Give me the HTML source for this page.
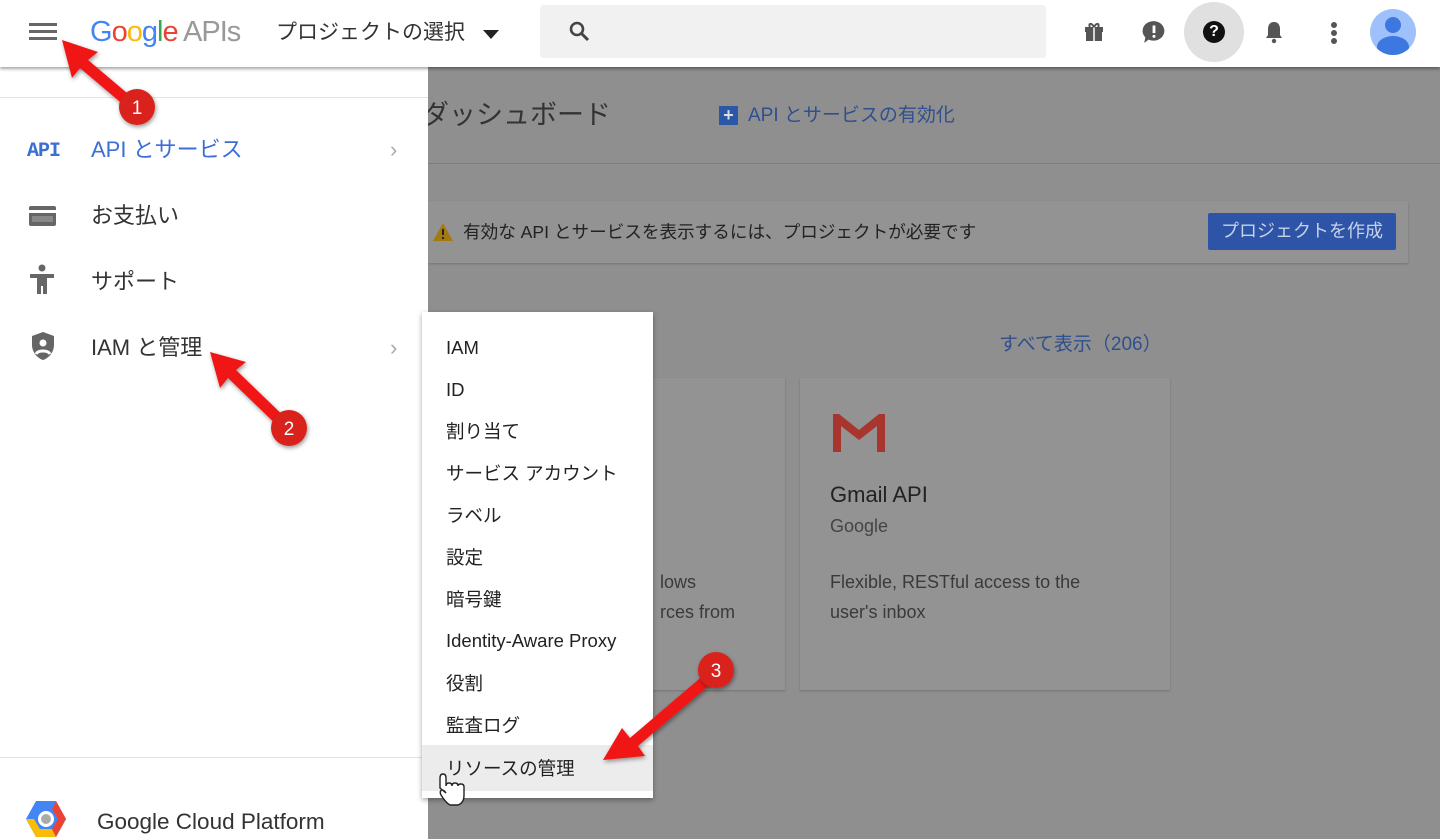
<!DOCTYPE html>
<html><head><meta charset="utf-8">
<style>
*{margin:0;padding:0;box-sizing:border-box}
body{width:1440px;height:839px;overflow:hidden;position:relative;background:#8f8f8f;font-family:"Liberation Sans","Noto Sans CJK JP",sans-serif;color:#212121}
.a{position:absolute}
.t{white-space:nowrap;line-height:1.2;transform:translateY(3px)}
#hdr .t{transform:translateY(1px)}
.btn{transform:none!important}
#hdr{left:0;top:0;width:1440px;height:67px;background:#fff;box-shadow:0 2px 3px rgba(0,0,0,.35);z-index:5}
#side{left:0;top:67px;width:428px;height:772px;background:#fff;z-index:3}
#menu{left:422px;top:312px;width:231px;height:486px;background:#fff;box-shadow:0 2px 5px rgba(0,0,0,.35);z-index:6}
#menu div{position:absolute;left:24px;font-size:18.5px;color:#222;white-space:nowrap;line-height:22px;height:22px}
</style></head><body>
<div id="hdr" class="a">
  <div class="a" style="left:29px;top:23px;width:28px;height:3px;background:#666;box-shadow:0 7px 0 #666,0 14px 0 #666"></div>
  <div class="a t" style="left:90px;top:14px;font-size:29px;letter-spacing:-1px"><span style="color:#4285f4">G</span><span style="color:#ea4335">o</span><span style="color:#fbbc05">o</span><span style="color:#4285f4">g</span><span style="color:#34a853">l</span><span style="color:#ea4335">e</span> <span style="color:#999">APIs</span></div>
  <div class="a t" style="left:276px;top:19px;font-size:21px;color:#333">プロジェクトの選択</div>
  <div class="a" style="left:483px;top:30px;border:8px solid transparent;border-top:9px solid #222;border-bottom:0"></div>
  <div class="a" style="left:540px;top:5px;width:506px;height:53px;background:#f1f1f1;border-radius:3px"></div>
  <svg class="a" style="left:568px;top:20px" width="24" height="24" viewBox="0 0 24 24"><circle cx="9" cy="9" r="6" fill="none" stroke="#444" stroke-width="2.6"/><path d="M13 13l7 7" stroke="#444" stroke-width="3"/></svg>
  <svg class="a" style="left:1082px;top:20px" width="24" height="24" viewBox="0 0 24 24"><path d="M3 7h18v5H3zM4 12h16v9H4z" fill="#555"/><path d="M12 7v14" stroke="#fff" stroke-width="1.5"/><path d="M12 7C9 2 6 4 8 7M12 7c3-5 6-3 4 0" fill="none" stroke="#555" stroke-width="2"/></svg>
  <svg class="a" style="left:1141px;top:19px" width="26" height="26" viewBox="0 0 24 24"><path d="M12 2a10 9 0 1 1-5 17l-4 3 1-5A10 9 0 0 1 12 2z" fill="#555"/><path d="M12 6v7" stroke="#fff" stroke-width="2.6"/><circle cx="12" cy="16" r="1.4" fill="#fff"/></svg>
  <div class="a" style="left:1184px;top:2px;width:60px;height:60px;border-radius:50%;background:#e0e0e0"></div>
  <div class="a" style="left:1203px;top:21px;width:22px;height:22px;border-radius:50%;background:#111;color:#fff;font-weight:bold;font-size:16px;text-align:center;line-height:22px">?</div>
  <svg class="a" style="left:1262px;top:19px" width="24" height="26" viewBox="0 0 24 26"><path d="M12 3c-4 0-6 3-6 7v6l-2 3h16l-2-3v-6c0-4-2-7-6-7z" fill="#555"/><circle cx="12" cy="22" r="2.2" fill="#555"/></svg>
  <div class="a" style="left:1331px;top:22px;width:6px;height:6px;border-radius:50%;background:#555;box-shadow:0 8px 0 #555,0 16px 0 #555"></div>
  <div class="a" style="left:1370px;top:9px;width:46px;height:46px;border-radius:50%;background:#9fc1fb;overflow:hidden">
    <div class="a" style="left:15px;top:8px;width:16px;height:16px;border-radius:50%;background:#3c78e0"></div>
    <div class="a" style="left:7px;top:27px;width:32px;height:22px;border-radius:50%;background:#3c78e0"></div>
  </div>
</div>

<div class="a t" style="left:422px;top:96px;font-size:27px;color:#333">ダッシュボード</div>
<div class="a" style="left:719px;top:106px;width:19px;height:19px;background:#2b57a8;color:#ddd;font-weight:bold;text-align:center;line-height:19px;font-size:18px">+</div>
<div class="a t" style="left:748px;top:102px;font-size:19px;color:#2f4f8e">API とサービスの有効化</div>
<div class="a" style="left:428px;top:163px;width:1012px;height:1px;background:#7d7d7d"></div>
<div class="a" style="left:428px;top:201px;width:980px;height:62px;background:#939393;box-shadow:0 1px 2px rgba(0,0,0,.2)"></div>
<svg class="a" style="left:432px;top:222px" width="22" height="20" viewBox="0 0 22 20"><path d="M11 1L21 19H1z" fill="#a37a10"/><path d="M11 7v6" stroke="#222" stroke-width="2"/><circle cx="11" cy="16" r="1.1" fill="#222"/></svg>
<div class="a t" style="left:463px;top:219px;font-size:17.6px;color:#222">有効な API とサービスを表示するには、プロジェクトが必要です</div>
<div class="a t btn" style="left:1208px;top:213px;width:188px;height:37px;background:#2d54a6;color:#c8d2e6;font-size:18px;text-align:center;line-height:37px;border-radius:2px">プロジェクトを作成</div>
<div class="a t" style="left:600px;top:325px;font-size:27px;color:#333">ビス</div>
<div class="a t" style="left:999px;top:331px;font-size:19px;color:#2f4f8e">すべて表示（206）</div>
<div class="a" style="left:560px;top:378px;width:225px;height:312px;background:#939393;box-shadow:0 1px 2px rgba(0,0,0,.2)"></div>
<div class="a" style="left:800px;top:378px;width:370px;height:312px;background:#939393;box-shadow:0 1px 2px rgba(0,0,0,.2)"></div>
<div class="a t" style="left:660px;top:564px;font-size:18px;color:#3a3a3a;line-height:30px">lows<br>rces from</div>
<svg class="a" style="left:830px;top:410px" width="58" height="44" viewBox="0 0 58 44"><path d="M3 4v38h8V16l18 14 18-14v26h8V4h-6L29 20 9 4z" fill="#a8352e"/></svg>
<div class="a t" style="left:830px;top:479px;font-size:22px;color:#222">Gmail API</div>
<div class="a t" style="left:830px;top:513px;font-size:18px;color:#444">Google</div>
<div class="a t" style="left:830px;top:564px;font-size:18px;color:#3a3a3a;line-height:30px">Flexible, RESTful access to the<br>user's inbox</div>

<div id="side" class="a">
  <div class="a" style="left:0;top:30px;width:428px;height:1px;background:#e3e3e3"></div>
  <div class="a t" style="left:27px;top:70px;font-family:'Liberation Mono',monospace;font-weight:bold;font-size:20px;color:#3b6fd4;letter-spacing:-1px">API</div>
  <div class="a t" style="left:91px;top:67px;font-size:22px;color:#3b6fd4">API とサービス</div>
  <div class="a t" style="left:390px;top:67px;font-size:22px;color:#aaa">›</div>
  <div class="a" style="left:29px;top:139px;width:27px;height:20px;background:#666;border-radius:2px"><div class="a" style="left:0;top:4px;width:27px;height:3px;background:#fff"></div><div class="a" style="left:3px;top:10px;width:21px;height:6px;background:#888"></div></div>
  <div class="a t" style="left:91px;top:133px;font-size:22px;color:#333">お支払い</div>
  <svg class="a" style="left:28px;top:197px" width="28" height="32" viewBox="0 0 28 32"><circle cx="14" cy="4" r="3.5" fill="#666"/><path d="M2 10h24v4h-7v16h-4v-8h-2v8H9V14H2z" fill="#666"/></svg>
  <div class="a t" style="left:91px;top:199px;font-size:22px;color:#333">サポート</div>
  <svg class="a" style="left:30px;top:264px" width="26" height="30" viewBox="0 0 26 30"><path d="M13 1L2 5v9c0 7 5 13 11 15 6-2 11-8 11-15V5z" fill="#666"/><circle cx="13" cy="12" r="3.5" fill="#fff"/><path d="M6 23c2-4 12-4 14 0" stroke="#fff" stroke-width="3" fill="none"/></svg>
  <div class="a t" style="left:91px;top:265px;font-size:22px;color:#333">IAM と管理</div>
  <div class="a t" style="left:390px;top:265px;font-size:22px;color:#aaa">›</div>
  <div class="a" style="left:0;top:690px;width:428px;height:1px;background:#e3e3e3"></div>
  <svg class="a" style="left:26px;top:733px" width="40" height="38" viewBox="0 0 40 38"><path d="M10 1h20l10 18-10 18H10L0 19z" fill="#4285f4"/><path d="M0 19l10 18h20l-4-8H14L8 19z" fill="#fbbc05"/><path d="M30 37l10-18-10-18-4 8 6 10-6 10z" fill="#ea4335"/><circle cx="20" cy="19" r="8" fill="#fff"/><circle cx="20" cy="19" r="5" fill="#aaa"/></svg>
  <div class="a t" style="left:97px;top:738px;font-size:22.5px;color:#333">Google Cloud Platform</div>
</div>

<div id="menu" class="a">
  <div style="top:25px">IAM</div>
  <div style="top:67px">ID</div>
  <div style="top:109px">割り当て</div>
  <div style="top:151px">サービス アカウント</div>
  <div style="top:193px">ラベル</div>
  <div style="top:235px">設定</div>
  <div style="top:277px">暗号鍵</div>
  <div style="top:318px">Identity-Aware Proxy</div>
  <div style="top:361px">役割</div>
  <div style="top:403px">監査ログ</div>
  <div style="top:433px;left:0;width:231px;height:46px;background:#ececec"></div>
  <div style="top:446px">リソースの管理</div>
</div>

<svg class="a" style="left:0;top:0;z-index:10" width="1440" height="839">
  <defs><filter id="s"><feDropShadow dx="1" dy="2" stdDeviation="2" flood-opacity=".4"/></filter></defs>
  <g filter="url(#s)" fill="#f01616">
    <path d="M62 40 L98 52 L88 60 L140 104 L132 112 L80 68 L72 78 Z"/>
    <path d="M210 352 L246 362 L236 370 L292 424 L284 432 L228 378 L220 388 Z"/>
    <path d="M603 760 L622 728 L630 738 L712 668 L720 676 L638 746 L645 756 Z"/>
  </g>
  <g filter="url(#s)">
    <circle cx="137" cy="107" r="18" fill="#d9201c"/>
    <circle cx="289" cy="428" r="18" fill="#d9201c"/>
    <circle cx="716" cy="670" r="18" fill="#d9201c"/>
  </g>
  <g fill="#fff" font-family="Liberation Sans,sans-serif" font-size="19" text-anchor="middle">
    <text x="137" y="114">1</text><text x="289" y="435">2</text><text x="716" y="677">3</text>
  </g>
  <path d="M440 788 v-10 q0-4 3-4 q3 0 3 4 v8 q0-3 3-3 t3 3 q0-3 3-3 t3 3 q0-2 3-2 t3 3 v8 q0 8-6 10 h-8 q-4-2-9-10 q-2-4 1-5 q2 0 4 3z" fill="#fff" stroke="#222" stroke-width="1.4"/>
</svg>
</body></html>
